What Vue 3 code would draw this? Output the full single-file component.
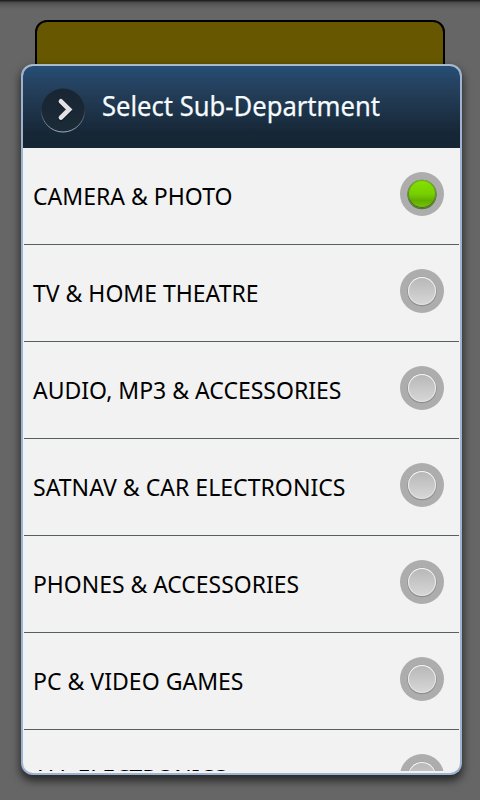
<script setup>
import { ref } from 'vue'

const items = [
  { label: 'CAMERA & PHOTO', width: 199.5 },
  { label: 'TV & HOME THEATRE', width: 225.5 },
  { label: 'AUDIO, MP3 & ACCESSORIES', width: 308.5 },
  { label: 'SATNAV & CAR ELECTRONICS', width: 312.5 },
  { label: 'PHONES & ACCESSORIES', width: 266 },
  { label: 'PC & VIDEO GAMES', width: 210.5 },
  { label: 'ALL ELECTRONICS', width: 193.5 }
]
const selected = ref(0)
</script>

<template>
  <div class="screen">
    <div class="backdrop-card"></div>
    <div class="dialog">
      <header class="header">
        <svg class="badge" width="46" height="46" viewBox="0 0 46 46">
          <defs>
            <linearGradient id="badgeFill" x1="0" y1="0" x2="0" y2="1">
              <stop offset="0" stop-color="#182532" />
              <stop offset="1" stop-color="#1c2b38" />
            </linearGradient>
            <linearGradient id="badgeRim" x1="0" y1="0" x2="0" y2="1">
              <stop offset="0.45" stop-color="#8fa0ae" stop-opacity="0" />
              <stop offset="1" stop-color="#a3afb8" />
            </linearGradient>
          </defs>
          <circle cx="23" cy="23.3" r="21.7" fill="url(#badgeFill)" stroke="url(#badgeRim)" />
          <path d="M21 15.4 L29.4 23 L21 31.6" fill="none" stroke="#111a23" stroke-width="5.5" stroke-linecap="round" stroke-linejoin="round" />
          <path d="M20.9 14.3 L29.2 22.5 L20.9 30.7" fill="none" stroke="#e2e2e4" stroke-width="4.6" stroke-linecap="round" stroke-linejoin="miter" />
        </svg>
        <svg class="title" width="300" height="40">
          <text x="0" y="26" textLength="278" lengthAdjust="spacingAndGlyphs">Select Sub-Department</text>
        </svg>
      </header>
      <div class="list">
        <div v-for="(item, i) in items" :key="item.label" class="row" @click="selected = i">
          <svg class="label" width="340" height="40">
            <text x="0" y="28" :textLength="item.width" lengthAdjust="spacingAndGlyphs">{{ item.label }}</text>
          </svg>
          <span class="radio" :class="{ on: selected === i }"><span class="knob"></span></span>
        </div>
      </div>
    </div>
  </div>
</template>

<style>
body {
  overflow: hidden;
}
</style>

<style scoped>
.screen {
  position: relative;
  box-sizing: border-box;
  width: 480px;
  height: 800px;
  padding: 64px 18px 25px 21px;
  overflow: hidden;
  background: linear-gradient(#202020 0, #242424 1px, #484848 2px, #555 4px, #666 9px);
  font-family: "Noto Sans", "Open Sans", sans-serif;
}
.backdrop-card {
  position: absolute;
  left: 35px;
  top: 20px;
  box-sizing: border-box;
  width: 410px;
  height: 120px;
  border: 2px solid #000;
  border-radius: 12px;
  background: #665700;
}
.dialog {
  position: relative;
  box-sizing: border-box;
  height: 711px;
  border: 2px solid #9db3d1;
  border-top-color: #a9bac8;
  border-radius: 12px;
  overflow: hidden;
  background: #f2f2f2;
  box-shadow: 0 5px 9px 1px rgba(0, 0, 0, 0.6);
}
.header {
  display: flex;
  box-sizing: border-box;
  height: 82px;
  padding-left: 17px;
  background: linear-gradient(#264e76 0, #254668 12px, #243e59 26px, #1c3145 50px, #162737 66px, #152534 82px);
}
.badge {
  flex: none;
  margin-top: 21px;
}
.title {
  flex: none;
  margin: 24px 0 0 16px;
  font-size: 28px;
  fill: #f5fbff;
  stroke: #f5fbff;
  stroke-width: 0.25px;
  overflow: visible;
}
.list {
  height: 623px;
  padding: 0 1px;
  overflow: hidden;
}
.row {
  display: flex;
  justify-content: space-between;
  box-sizing: border-box;
  height: 97px;
  padding: 0 15px 0 9px;
  border-bottom: 1px solid #566060;
}
.label {
  margin-top: 29px;
  font-size: 24px;
  fill: #000;
  overflow: visible;
}
.radio {
  display: flex;
  flex: none;
  align-items: center;
  justify-content: center;
  width: 44px;
  height: 44px;
  margin-top: 24px;
  border-radius: 50%;
  background: #adadad;
}
.knob {
  box-sizing: border-box;
  width: 28px;
  height: 28px;
  border: 1px solid transparent;
  border-radius: 50%;
  background:
    linear-gradient(#b8b8b8, #d6d6d6) padding-box,
    linear-gradient(#f8f8f8, #e2e2e2) border-box;
  box-shadow: 0 0.5px 0 0.7px #8e8e8e;
}
.on .knob {
  background:
    linear-gradient(#85e000, #76cf00 50%, #62ae00 75%, #74c400) padding-box,
    linear-gradient(#6fb414, #456b20) border-box;
  box-shadow: 0 0.5px 0 0.7px #54743a;
}
</style>
